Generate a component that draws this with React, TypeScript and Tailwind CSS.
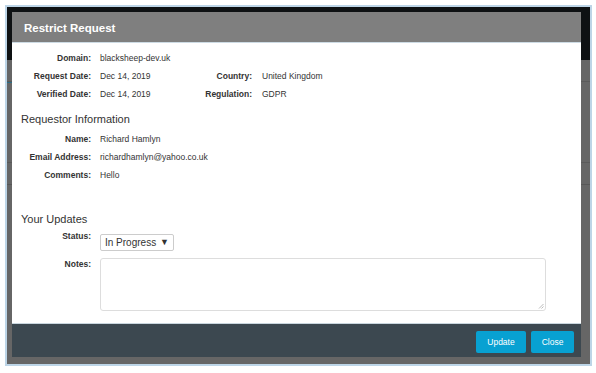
import React from "react";

const font = { fontFamily: '"Liberation Sans", Arial, sans-serif' };

function InfoRow({ label, value, children }: { label: string; value: string; children?: React.ReactNode }) {
  return (
    <div className="flex items-center h-[18px]">
      <div className="w-[79px] text-right font-bold text-[8.5px] text-[#333]">{label}</div>
      <div className="w-[88px] pl-[9px] text-[8.5px] text-[#333] whitespace-nowrap">{value}</div>
      {children}
    </div>
  );
}

export default function App() {
  return (
    <div className="w-[596px] h-[373px] bg-white pl-[5px] pt-[5px]" style={font}>
      <div className="relative w-[587px] h-[361px] border-2 border-[#bdd5e7] bg-[#666] overflow-hidden">
        {/* page behind the backdrop */}
        <div className="h-[53px] bg-[#0e1113]"></div>
        <div className="h-[22px] border-b border-[#5a5a5a]"></div>
        <div className="h-[1px] w-[5px] bg-[#2d6f86]"></div>
        <div className="h-[80px] border-b border-[#5a5a5a]"></div>
        <div className="h-[22px] border-b border-[#575757]"></div>

        {/* modal */}
        <div className="absolute left-[5px] top-[5px] w-[569px] h-[345px] flex flex-col bg-white">
          <div className="h-[31px] bg-[#7f7f7f] border-b border-[#cddbe4] flex items-center pl-[12px] pt-[3px]">
            <h1 className="text-white font-bold text-[11.5px]">Restrict Request</h1>
          </div>

          <div className="flex-1 pt-[6px]">
            <InfoRow label="Domain:" value="blacksheep-dev.uk" />
            <InfoRow label="Request Date:" value="Dec 14, 2019">
              <div className="w-[73px] text-right font-bold text-[8.5px] text-[#333]">Country:</div>
              <div className="pl-[10px] text-[8.5px] text-[#333]">United Kingdom</div>
            </InfoRow>
            <InfoRow label="Verified Date:" value="Dec 14, 2019">
              <div className="w-[73px] text-right font-bold text-[8.5px] text-[#333]">Regulation:</div>
              <div className="pl-[10px] text-[8.5px] text-[#333]">GDPR</div>
            </InfoRow>

            <h2 className="mt-[8px] pl-[9px] text-[11px] leading-[16px] text-[#333]">Requestor Information</h2>
            <div className="mt-[3px]">
              <InfoRow label="Name:" value="Richard Hamlyn" />
              <InfoRow label="Email Address:" value="richardhamlyn@yahoo.co.uk" />
              <InfoRow label="Comments:" value="Hello" />
            </div>

            <h2 className="mt-[27px] pl-[9px] text-[11px] leading-[16px] text-[#333]">Your Updates</h2>
            <div className="mt-[3px] flex items-start">
              <div className="w-[79px] text-right font-bold text-[8.5px] leading-[12px] text-[#333]">Status:</div>
              <div className="ml-[9px] mt-[4px] w-[74px] h-[17px] border border-[#ccc] rounded-[2px] flex items-center justify-between px-[4px] text-[10px] text-[#333]">
                <span>In Progress</span>
                <span className="text-[9px]">▼</span>
              </div>
            </div>
            <div className="mt-[7px] flex items-start">
              <div className="w-[79px] text-right font-bold text-[8.5px] leading-[12px] text-[#333]">Notes:</div>
              <div className="relative ml-[9px] w-[446px] h-[53px] border border-[#ddd] rounded-[3px]">
                <svg className="absolute right-[1px] bottom-[1px]" width="6" height="6" viewBox="0 0 6 6">
                  <path d="M5.5 1 L1 5.5 M5.5 3.5 L3.5 5.5" stroke="#aaa" strokeWidth="0.8" />
                </svg>
              </div>
            </div>
          </div>

          <div className="h-[34px] bg-[#3c4850] border-t border-[#c9d6de] flex justify-end items-start pt-[7px] pr-[7px] gap-[5px]">
            <button className="w-[50px] h-[22px] bg-[#08a1d2] rounded-[2px] text-white text-[8.5px]">Update</button>
            <button className="w-[43px] h-[22px] bg-[#08a1d2] rounded-[2px] text-white text-[8.5px]">Close</button>
          </div>
        </div>
      </div>
    </div>
  );
}
